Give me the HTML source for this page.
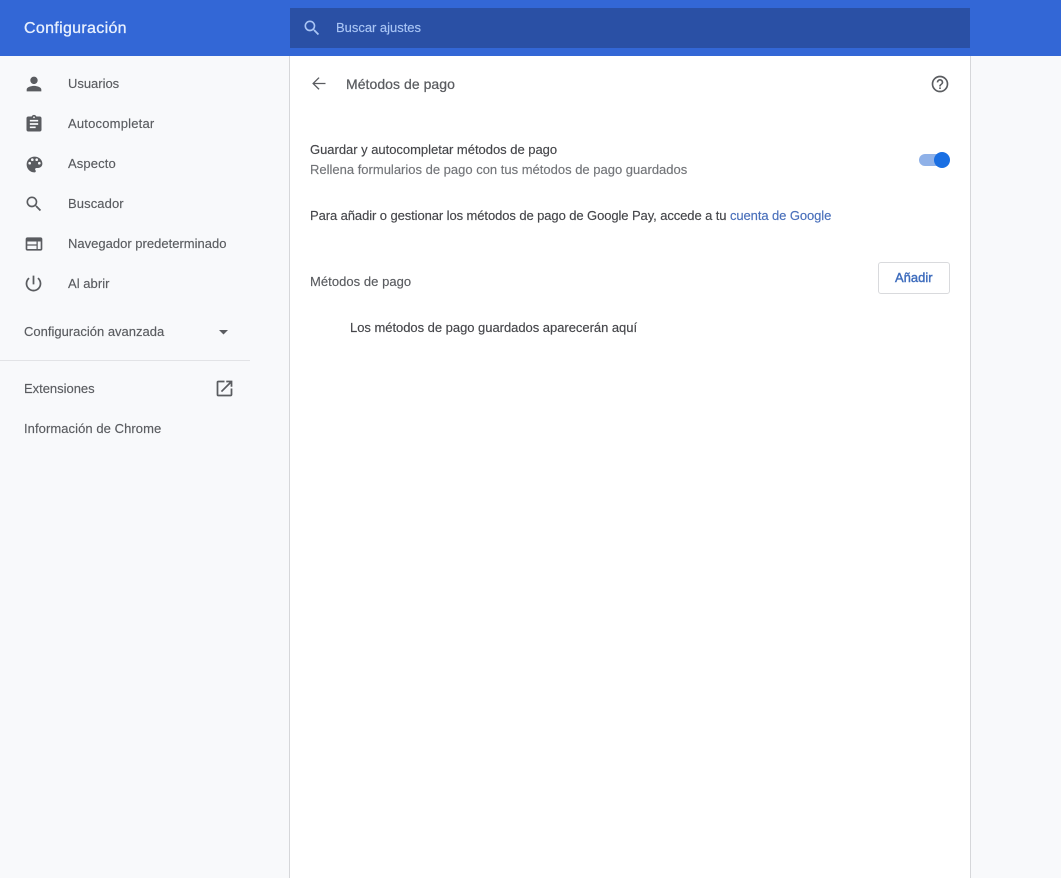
<!DOCTYPE html>
<html lang="es"><head><meta charset="utf-8"><title>Configuración</title>
<style>
html,body{margin:0;padding:0;width:1061px;height:878px;overflow:hidden;background:#f8f9fb;font-family:"Liberation Sans",sans-serif;font-size:13px;color:#5a5c60}
.t{position:absolute;white-space:nowrap;line-height:16px;-webkit-text-stroke:.15px currentColor}
svg{position:absolute;display:block}
#hdr{position:absolute;left:0;top:0;width:1061px;height:56px;background:#3367d6}
#search{position:absolute;left:290px;top:8px;width:680px;height:40px;background:#2a50a5}
#card{position:absolute;left:289px;top:56px;width:680px;height:822px;background:#fff;border-left:1px solid #d6d7da;border-right:1px solid #d6d7da}
#sep{position:absolute;left:0;top:360px;width:250px;height:1px;background:#e2e3e6}
#btn{position:absolute;left:878px;top:262px;width:70px;height:30px;border:1px solid #d9dadd;border-radius:3px;background:#fff}
#track{position:absolute;left:919px;top:154px;width:28px;height:12px;border-radius:6px;background:#8fb1e8}
#knob{position:absolute;left:934px;top:152px;width:16px;height:16px;border-radius:50%;background:#1a6fe3}
</style></head><body>
<div id="hdr"></div>
<div id="search"></div>
<div id="card"></div>
<div id="sep"></div>
<div class="t" style="left:24px;top:21px;font-size:16px;color:#e8f0fe;letter-spacing:.32px;-webkit-text-stroke:.3px #e8f0fe">Configuración</div>
<svg style="left:301.500px;top:18px" width="20" height="20" viewBox="0 0 24 24" fill="#a9c5f5"><path d="M15.500 14h-.79l-.28-.27A6.470 6.470 0 0 0 16 9.500 6.500 6.500 0 1 0 9.500 16c1.610 0 3.090-.59 4.230-1.570l.27.28v.79l5 4.990L20.490 19l-4.990-5zm-6 0C7.010 14 5 11.990 5 9.500S7.010 5 9.500 5 14 7.010 14 9.500 11.990 14 9.500 14z"/></svg>
<div class="t" style="left:336px;top:20px;color:#a9c5f5;letter-spacing:-.02px">Buscar ajustes</div>

<svg style="left:23px;top:73px" width="22" height="22" viewBox="0 0 24 24" fill="#5a5c60"><path d="M12 12c2.200 0 4-1.800 4-4s-1.800-4-4-4-4 1.800-4 4 1.800 4 4 4zm0 2c-2.700 0-8 1.300-8 4v2h16v-2c0-2.700-5.300-4-8-4z"/></svg>
<div class="t" style="left:68px;top:76px;letter-spacing:-.02px">Usuarios</div>
<svg style="left:24px;top:114px" width="20" height="20" viewBox="0 0 24 24" fill="#5a5c60"><path d="M19 3h-4.200C14.400 1.800 13.300 1 12 1s-2.400.8-2.800 2H5c-1.100 0-2 .9-2 2v14c0 1.100.9 2 2 2h14c1.100 0 2-.9 2-2V5c0-1.100-.9-2-2-2zm-7 0c.6 0 1 .4 1 1s-.4 1-1 1-1-.4-1-1 .4-1 1-1zm2 14H7v-2h7v2zm3-4H7v-2h10v2zm0-4H7V7h10v2z"/></svg>
<div class="t" style="left:68px;top:116px;letter-spacing:.2px">Autocompletar</div>
<svg style="left:23.500px;top:153.500px" width="21" height="21" viewBox="0 0 24 24" fill="#5a5c60"><path d="M12 3a9 9 0 0 0 0 18c.8 0 1.500-.7 1.500-1.500 0-.4-.1-.7-.4-1-.2-.3-.4-.6-.4-1 0-.8.7-1.500 1.500-1.500H16c2.800 0 5-2.200 5-5 0-4.400-4-8-9-8zM6.500 12a1.500 1.500 0 1 1 0-3 1.500 1.500 0 0 1 0 3zm3-4a1.500 1.500 0 1 1 0-3 1.500 1.500 0 0 1 0 3zm5 0a1.500 1.500 0 1 1 0-3 1.500 1.500 0 0 1 0 3zm3 4a1.500 1.500 0 1 1 0-3 1.500 1.500 0 0 1 0 3z"/></svg>
<div class="t" style="left:68px;top:156px;letter-spacing:.12px">Aspecto</div>
<svg style="left:23.500px;top:194px" width="20" height="20" viewBox="0 0 24 24" fill="#5a5c60"><path d="M15.500 14h-.79l-.28-.27A6.470 6.470 0 0 0 16 9.500 6.500 6.500 0 1 0 9.500 16c1.610 0 3.090-.59 4.230-1.570l.27.28v.79l5 4.990L20.490 19l-4.990-5zm-6 0C7.010 14 5 11.990 5 9.500S7.010 5 9.500 5 14 7.010 14 9.500 11.990 14 9.500 14z"/></svg>
<div class="t" style="left:68px;top:196px;letter-spacing:.1px">Buscador</div>
<svg style="left:24px;top:234px" width="20" height="20" viewBox="0 0 24 24" fill="#5a5c60"><path d="M20 4H4c-1.100 0-2 .9-2 2v12c0 1.100.9 2 2 2h16c1.100 0 2-.9 2-2V6c0-1.100-.9-2-2-2zM4 9h11v3.500H4V9zm0 5h11v4H4v-4zm16 4h-3.500V9H20v9z"/></svg>
<div class="t" style="left:68px;top:236px;letter-spacing:.01px">Navegador predeterminado</div>
<svg style="left:23px;top:273px" width="21" height="21" viewBox="0 0 24 24" fill="#5a5c60"><path d="M13 3h-2v10h2V3zm4.800 2.200l-1.400 1.400A7 7 0 1 1 7.600 6.600L6.200 5.200a9 9 0 1 0 11.600 0z"/></svg>
<div class="t" style="left:68px;top:276px;letter-spacing:.04px">Al abrir</div>
<div class="t" style="left:24px;top:324px;letter-spacing:0">Configuración avanzada</div>
<svg style="left:219px;top:330px" width="9" height="4.500" viewBox="0 0 10 5" fill="#5a5c60"><path d="M0 0h10L5 5z"/></svg>
<div class="t" style="left:24px;top:381px;letter-spacing:-.02px">Extensiones</div>
<svg style="left:213.500px;top:378px" width="21" height="21" viewBox="0 0 24 24" fill="#5a5c60"><path d="M19 19H5V5h7V3H5a2 2 0 0 0-2 2v14a2 2 0 0 0 2 2h14c1.100 0 2-.9 2-2v-7h-2v7zM14 3v2h3.600l-9.800 9.800 1.400 1.400L19 6.400V10h2V3h-7z"/></svg>
<div class="t" style="left:24px;top:421px;letter-spacing:.07px">Información de Chrome</div>

<svg style="left:308px;top:73px" width="21" height="21" viewBox="0 0 24 24" fill="#5a5c60"><path d="M20 11.300H7.600l5.600-5.600L12 4.800 4.800 12l7.200 7.200 1.200-1-5.600-5.500H20z"/></svg>
<div class="t" style="left:346px;top:76px;font-size:14px;letter-spacing:.05px;-webkit-text-stroke:.25px #5a5c60">Métodos de pago</div>
<svg style="left:930px;top:74px" width="20" height="20" viewBox="0 0 24 24" fill="#5a5c60"><path d="M11 18h2v-2h-2v2zm1-16a10 10 0 1 0 0 20 10 10 0 0 0 0-20zm0 18a8 8 0 1 1 0-16 8 8 0 0 1 0 16zm0-14a4 4 0 0 0-4 4h2c0-1.100.9-2 2-2s2 .9 2 2c0 2-3 1.750-3 5h2c0-2.250 3-2.500 3-5a4 4 0 0 0-4-4z"/></svg>
<div class="t" style="left:310px;top:142px;color:#45464a;letter-spacing:-.02px">Guardar y autocompletar métodos de pago</div>
<div class="t" style="left:310px;top:162px;color:#737579;letter-spacing:0">Rellena formularios de pago con tus métodos de pago guardados</div>
<div id="track"></div><div id="knob"></div>
<div class="t" style="left:310px;top:208px;color:#45464a;letter-spacing:-.087px">Para añadir o gestionar los métodos de pago de Google Pay, accede a tu <span style="color:#4a70bb">cuenta de Google</span></div>
<div class="t" style="left:310px;top:274px;letter-spacing:.05px">Métodos de pago</div>
<div id="btn"></div>
<div class="t" style="left:895px;top:270px;color:#3f6dbd;font-size:13px;letter-spacing:0;-webkit-text-stroke:.4px #3f6dbd">Añadir</div>
<div class="t" style="left:350px;top:320px;color:#45464a;letter-spacing:-.03px">Los métodos de pago guardados aparecerán aquí</div>
</body></html>
